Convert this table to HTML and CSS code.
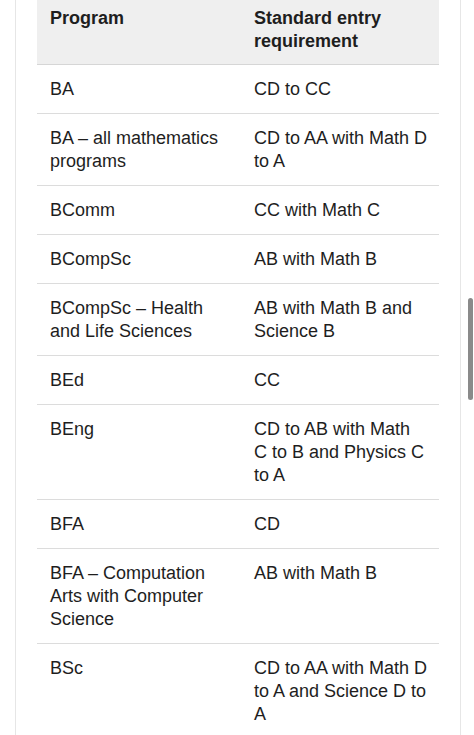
FILE: index.html
```html
<!DOCTYPE html>
<html>
<head>
<meta charset="utf-8">
<link rel="stylesheet" href="styles.css">
</head>
<body>
<div class="frame">
  <table class="req">
    <thead>
      <tr><th class="c1">Program</th><th class="c2">Standard entry requirement</th></tr>
    </thead>
    <tbody>
      <tr><td>BA</td><td>CD to CC</td></tr>
      <tr><td>BA – all mathematics programs</td><td>CD to AA with Math D to A</td></tr>
      <tr><td>BComm</td><td>CC with Math C</td></tr>
      <tr><td>BCompSc</td><td>AB with Math B</td></tr>
      <tr><td>BCompSc – Health and Life Sciences</td><td>AB with Math B and Science B</td></tr>
      <tr><td>BEd</td><td>CC</td></tr>
      <tr><td>BEng</td><td>CD to AB with Math C to B and Physics C to A</td></tr>
      <tr><td>BFA</td><td>CD</td></tr>
      <tr><td>BFA – Computation Arts with Computer Science</td><td>AB with Math B</td></tr>
      <tr><td>BSc</td><td>CD to AA with Math D to A and Science D to A</td></tr>
    </tbody>
  </table>
</div>
<div class="scrollbar"></div>
</body>
</html>
```
FILE: styles.css
```css
html, body {
  margin: 0;
  padding: 0;
  background: #ffffff;
}
body {
  width: 474px;
  height: 735px;
  overflow: hidden;
  position: relative;
  font-family: "Liberation Sans", Arial, sans-serif;
  color: #1e1e1e;
}
.frame {
  margin-left: 15px;
  width: 446px;
  min-height: 735px;
  border-left: 1px solid #e6e6e6;
  border-right: 1px solid #e6e6e6;
  padding: 0 21px;
  box-sizing: border-box;
}
.req {
  width: 402px;
  table-layout: fixed;
  border-collapse: collapse;
  font-size: 18px;
  line-height: 23px;
}
.req th, .req td {
  text-align: left;
  vertical-align: top;
  padding: 13px 13px 12px 13px;
  border-bottom: 1px solid #dcdcdc;
}
.req thead th {
  background: #efefef;
  font-weight: bold;
  padding-top: 7px;
  padding-bottom: 11px;
  border-bottom: 1px solid #d6d6d6;
}
.req .c1 {
  width: 204px;
  box-sizing: border-box;
}
.req .c2 {
  width: 198px;
  box-sizing: border-box;
}
.req td:last-child, .req .c2 {
  padding-right: 11.5px;
}
.scrollbar {
  position: absolute;
  left: 468px;
  top: 298px;
  width: 5px;
  height: 102px;
  border-radius: 3px;
  background: #8a8a8a;
}
```
